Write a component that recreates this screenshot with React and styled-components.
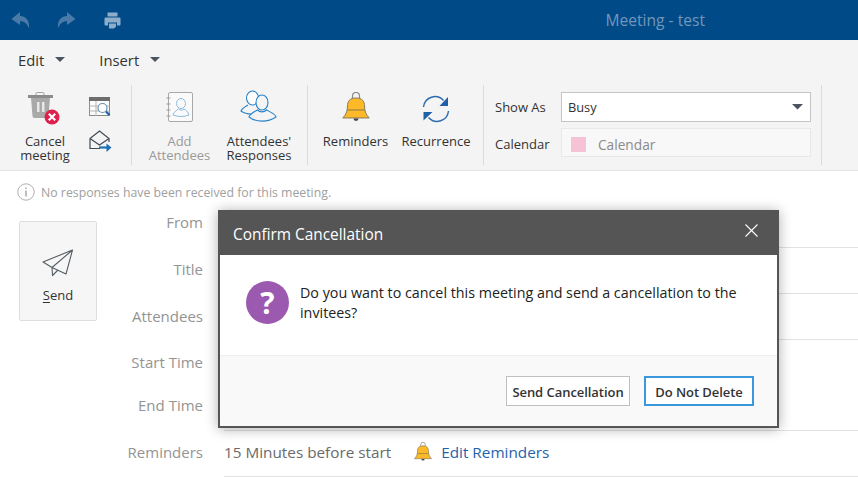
import React from "react";
import styled, { createGlobalStyle } from "styled-components";

const Global = createGlobalStyle`
  html, body { margin: 0; padding: 0; background: #fff; }
  body { font-family: "Open Sans", "Noto Sans", "Liberation Sans", sans-serif; overflow: hidden; }
  * { box-sizing: border-box; }
`;

const Page = styled.div`
  position: relative;
  width: 858px;
  height: 478px;
  overflow: hidden;
  background: #fff;
`;

const TitleBar = styled.header`
  height: 40px;
  background: #004a88;
  display: flex;
  align-items: center;
  padding: 0 153px 0 11px;
`;
const TitleTools = styled.div`
  display: flex;
  align-items: center;
  gap: 27px;
`;
const PrinterSlot = styled.span`
  display: flex;
  margin-left: 1px;
`;
const WindowTitle = styled.div`
  margin-left: auto;
  color: #7197bc;
  font-size: 15.6px;
  line-height: 20px;
`;

const Toolbar = styled.section`
  height: 131px;
  background: #f4f4f4;
  border-bottom: 1px solid #e4e4e4;
`;
const MenuRow = styled.nav`
  height: 45px;
  display: flex;
  align-items: center;
  padding: 0 0 6px 18px;
  gap: 34px;
`;
const Menu = styled.div`
  display: flex;
  align-items: center;
  gap: 11px;
  font-size: 14.8px;
  color: #333;
`;
const Caret = styled.span`
  width: 0;
  height: 0;
  border-left: 5.5px solid transparent;
  border-right: 5.5px solid transparent;
  border-top: 5px solid #4a5560;
`;
const Ribbon = styled.div`
  display: flex;
  height: 80px;
`;
const Group = styled.div`
  width: ${(p) => p.$w}px;
  border-right: 1px solid #dcdcdc;
  display: flex;
  padding-left: ${(p) => p.$pad || 0}px;
  flex: none;
`;
const RibbonButton = styled.div`
  width: ${(p) => p.$w}px;
  flex: none;
  display: flex;
  flex-direction: column;
  align-items: center;
  color: ${(p) => (p.$muted ? "#9a9a9a" : "#333")};
  font-size: 13px;
  line-height: 14px;
  text-align: center;
`;
const IconSlot = styled.div`
  height: 49px;
  width: 100%;
  display: flex;
  align-items: flex-start;
  justify-content: center;
  padding-top: ${(p) => p.$top}px;
`;
const TrashSlot = styled.span`
  display: flex;
  margin-left: -2px;
`;
const SmallIcons = styled.div`
  display: flex;
  flex-direction: column;
  align-items: center;
  padding-top: 12px;
  gap: 12px;
  width: 30px;
  margin-left: 10px;
`;
const FieldGrid = styled.div`
  display: grid;
  grid-template-columns: 66px 250px;
  grid-template-rows: 30px 29px;
  row-gap: 6px;
  padding: 7px 0 0 11px;
  align-items: center;
  font-size: 13px;
  color: #333;
`;
const FieldLabel = styled.span`
  padding-top: ${(p) => p.$top}px;
`;
const Select = styled.div`
  height: 30px;
  background: #fff;
  border: 1px solid #c4c4c4;
  display: flex;
  align-items: center;
  justify-content: space-between;
  padding: 0 6px 0 6px;
  font-size: 12.8px;
  color: #333;
`;
const DisabledField = styled.div`
  height: 29px;
  background: #f8f8f8;
  border: 1px solid #e8e8e8;
  display: flex;
  align-items: center;
  gap: 12px;
  padding: 3px 0 0 9px;
  font-size: 13.7px;
  color: #8a8a8a;
`;
const Swatch = styled.i`
  display: block;
  width: 15px;
  height: 15px;
  background: #f6c2d6;
`;

const Notice = styled.div`
  height: 31px;
  display: flex;
  align-items: center;
  gap: 6px;
  padding: 11px 0 0 17px;
  font-size: 12.3px;
  color: #a0a0a0;
`;

const Body = styled.main`
  display: flex;
`;
const SendColumn = styled.div`
  width: 116px;
  padding: 19px 0 0 19px;
  flex: none;
`;
const SendButton = styled.div`
  width: 78px;
  height: 100px;
  background: #f6f6f6;
  border: 1px solid #dedede;
  border-radius: 2px;
  display: flex;
  flex-direction: column;
  align-items: center;
  padding-top: 27px;
  gap: 9px;
  font-size: 13px;
  color: #333;
  u { text-underline-offset: 2px; }
`;
const Form = styled.div`
  flex: 1;
`;
const Row = styled.div`
  display: flex;
  height: ${(p) => p.$h}px;
`;
const Label = styled.div`
  width: 87px;
  flex: none;
  text-align: right;
  color: #949494;
  font-size: 15px;
  padding-top: ${(p) => p.$top}px;
  line-height: 20px;
`;
const Value = styled.div`
  flex: 1;
  margin-left: 21px;
  border-bottom: ${(p) => (p.$line ? "1px solid #e2e2e2" : "none")};
  display: flex;
  align-items: center;
  padding-bottom: 3px;
  font-size: 15.3px;
  color: #6a6a6a;
`;
const ReminderBell = styled.span`
  display: flex;
  margin: 0 9px 0 23px;
`;
const LinkText = styled.span`
  color: #1f63ab;
`;

const Dialog = styled.div`
  position: absolute;
  left: 218px;
  top: 210px;
  width: 561px;
  height: 218px;
  border: 2px solid #555;
  border-top: none;
  background: #fff;
  box-shadow: 0 1px 12px rgba(0, 0, 0, 0.32);
  display: flex;
  flex-direction: column;
`;
const DialogHead = styled.div`
  height: 45px;
  margin: 0 -2px;
  padding: 4px 21px 0 15px;
  background: #555;
  color: #fff;
  font-size: 15.4px;
  display: flex;
  align-items: center;
  justify-content: space-between;
  flex: none;
`;
const CloseSlot = styled.span`
  display: flex;
  margin-top: -9px;
`;
const DialogBody = styled.div`
  height: 100px;
  display: flex;
  padding: 26px 20px 0 26px;
  gap: 11px;
  flex: none;
`;
const Question = styled.div`
  width: 43px;
  height: 43px;
  flex: none;
  border-radius: 50%;
  background: #9b59b0;
  color: #fff;
  font-size: 30px;
  font-weight: 700;
  line-height: 43px;
  text-align: center;
`;
const Message = styled.p`
  margin: 2px 0 0;
  font-size: 14.3px;
  line-height: 20px;
  color: #222;
`;
const DialogFoot = styled.div`
  flex: 1;
  background: #f9f9f9;
  border-top: 1px solid #eee;
  display: flex;
  justify-content: flex-end;
  align-items: flex-start;
  gap: 14px;
  padding: 20px 23px 0 0;
`;
const Button = styled.div`
  height: 30px;
  width: ${(p) => p.$w}px;
  background: #fff;
  border: ${(p) => (p.$primary ? "2px solid #3c98dc" : "1px solid #c0c0c0")};
  font-size: 13px;
  font-weight: 600;
  letter-spacing: -0.05px;
  padding-top: 1px;
  color: #333;
  display: flex;
  align-items: center;
  justify-content: center;
`;

const Undo = ({ flip }) => (
  <svg width="19" height="17" viewBox="0 0 19 17" style={flip ? { transform: "scaleX(-1)" } : undefined}>
    <path d="M9 0 L0.500 7 L9 13 V9.200 C13 9 16.200 11 18 16.500 C19 9 15 4 9 4 Z" fill="#4a7ba8" />
  </svg>
);
const Printer = () => (
  <svg width="17" height="17" viewBox="0 0 17 17">
    <path d="M3.500 0.500h10v4h-10z" fill="#8fadc9" />
    <path d="M1.500 5.500h14a1 1 0 0 1 1 1v6a1 1 0 0 1-1 1h-2.500v-3h-9v3H1.500a1 1 0 0 1-1-1v-6a1 1 0 0 1 1-1z" fill="#8fadc9" />
    <path d="M5 11.500h7v3l-2 2H5z" fill="#8fadc9" />
  </svg>
);
const Trash = () => (
  <svg width="34" height="34" viewBox="0 0 34 34">
    <path d="M9 4V2.500a1 1 0 0 1 1-1h6a1 1 0 0 1 1 1V4" fill="none" stroke="#a5a5a5" />
    <rect x="1" y="4" width="25" height="3" fill="#8b8b8b" />
    <path d="M4 7h19l-1.500 18a2 2 0 0 1-2 2H7.500a2 2 0 0 1-2-2z" fill="#a9a9a9" />
    <rect x="10" y="11" width="2.500" height="10" fill="#e8e8e8" />
    <rect x="15" y="11" width="2.500" height="10" fill="#e8e8e8" />
    <circle cx="25" cy="26" r="7.500" fill="#e0204c" />
    <path d="M21.800 22.800l6.400 6.400M28.200 22.800l-6.400 6.400" stroke="#fff" strokeWidth="2.200" />
  </svg>
);
const CalendarSearch = () => (
  <svg width="23" height="21" viewBox="0 0 23 21">
    <rect x="0.500" y="0.500" width="20" height="18" fill="#fdfdfd" stroke="#8a8a8a" />
    <rect x="0" y="0" width="21" height="4" fill="#6d6d6d" />
    <path d="M0.500 9h20M0.500 14h20M7 4v15" stroke="#b4b4b4" />
    <circle cx="13.500" cy="11" r="4.500" fill="#fff" stroke="#6a8fb0" strokeWidth="1.200" />
    <path d="M17 14.500l3.500 3.500" stroke="#1f5f9f" strokeWidth="2.200" />
  </svg>
);
const EnvelopeSend = () => (
  <svg width="23" height="23" viewBox="0 0 23 23">
    <path d="M1 8.500 L10.500 1 L20 8.500 V12 M1 8.500 V18.500 H11" fill="none" stroke="#3f4a54" strokeWidth="1.200" />
    <path d="M1 8.500 L10.500 15 L20 8.500" fill="none" stroke="#3f4a54" strokeWidth="1.200" />
    <path d="M10 17.500h9" stroke="#1f6fb5" strokeWidth="2.200" />
    <path d="M17.500 13.500l5 4-5 4.500z" fill="#1f6fb5" />
  </svg>
);
const AddressBook = () => (
  <svg width="28" height="31" viewBox="0 0 28 31">
    <rect x="2.500" y="0.500" width="24" height="29" rx="1.500" fill="#fafafa" stroke="#a9a9a9" />
    <path d="M0.500 6h4M0.500 12h4M0.500 18h4M0.500 24h4" stroke="#9a9a9a" />
    <ellipse cx="15" cy="11.500" rx="4.500" ry="5" fill="none" stroke="#8fbbdc" />
    <path d="M7 23 C8 19.500 11 18 12.500 17 C14 18.500 16.500 18.500 18 17 C19.500 18 22 19.500 23 23 C18 25 12 25 7 23Z" fill="none" stroke="#8fbbdc" />
  </svg>
);
const Attendees = () => (
  <svg width="38" height="34" viewBox="0 0 38 34">
    <ellipse cx="12.500" cy="8" rx="6" ry="7" fill="#fff" stroke="#2b83c8" strokeWidth="1.100" />
    <path d="M8 15 C5 17 2 18.500 1 21 C4 23.500 8 24 12 24" fill="none" stroke="#2b83c8" strokeWidth="1.100" />
    <ellipse cx="22" cy="12.500" rx="6" ry="7.500" fill="#f4f4f4" stroke="#2b83c8" strokeWidth="1.100" />
    <path d="M17.500 20 C14 22 10 23.500 9 27 C16 32.500 28 32.500 36 27 C35 23.500 30 22 26.500 20 C24 22.500 20 22.500 17.500 20Z" fill="#f4f4f4" stroke="#2b83c8" strokeWidth="1.100" />
  </svg>
);
const Bell = ({ size = 28 }) => (
  <svg width={size} height={size * 1.07} viewBox="0 0 28 30">
    <path d="M10.500 7 V4 a3.500 3.500 0 0 1 7 0 V7" fill="none" stroke="#8a8a8a" strokeWidth="1.200" />
    <path d="M14 6 C7.500 6 5.500 9.500 5.500 14 C5.500 20 3.500 23 0.800 26 H27.200 C24.500 23 22.500 20 22.500 14 C22.500 9.500 20.500 6 14 6Z" fill="#fdb927" stroke="#857a5c" strokeWidth="1" />
    <path d="M5 18h18" stroke="#857a4c" strokeWidth="1" />
    <path d="M11.500 26.500h5a2.500 2.500 0 0 1-5 0z" fill="#444" />
  </svg>
);
const Recurrence = () => (
  <svg width="28" height="28" viewBox="0 0 28 28">
    <path d="M1.500 12 A11.500 11.500 0 0 1 21.500 5.500" fill="none" stroke="#2b6cb0" strokeWidth="1.400" />
    <path d="M26.500 16 A11.500 11.500 0 0 1 6.500 22.500" fill="none" stroke="#2b6cb0" strokeWidth="1.400" />
    <path d="M26 2 V11 H17.500 Z" fill="#1f5fa8" />
    <path d="M1.500 25.500 V17 H10.500 Z" fill="#1f5fa8" />
  </svg>
);
const Paper = () => (
  <svg width="32" height="28" viewBox="0 0 32 28">
    <path d="M30.500 1 L1 13 L10 18.500 Z M30.500 1 L10 18.500 L10.500 26.500 L15.500 21.500 M30.500 1 L24 25 L10 18.500" fill="none" stroke="#555e66" strokeWidth="1.100" strokeLinejoin="round" />
  </svg>
);
const Info = () => (
  <svg width="18" height="18" viewBox="0 0 18 18">
    <circle cx="9" cy="9" r="8.200" fill="none" stroke="#b0b0b0" strokeWidth="1" />
    <rect x="8.300" y="7.500" width="1.400" height="6" fill="#a0a0a0" />
    <rect x="8.300" y="4.500" width="1.400" height="1.500" fill="#a0a0a0" />
  </svg>
);
const Close = () => (
  <svg width="13" height="13" viewBox="0 0 13 13">
    <path d="M0.500 0.500l12 12M12.500 0.500l-12 12" stroke="#fff" strokeWidth="1.100" />
  </svg>
);
const DownCaret = () => (
  <svg width="12" height="6" viewBox="0 0 12 6">
    <path d="M0 0h11L5.500 5.500z" fill="#4a5560" />
  </svg>
);

export default function App() {
  return (
    <Page>
      <Global />
      <TitleBar>
        <TitleTools>
          <Undo />
          <Undo flip />
          <PrinterSlot><Printer /></PrinterSlot>
        </TitleTools>
        <WindowTitle>Meeting - test</WindowTitle>
      </TitleBar>

      <Toolbar>
        <MenuRow>
          <Menu>Edit <Caret /></Menu>
          <Menu>Insert <Caret /></Menu>
        </MenuRow>
        <Ribbon>
          <Group $w={132} $pad={15}>
            <RibbonButton $w={60}>
              <IconSlot $top={6}><TrashSlot><Trash /></TrashSlot></IconSlot>
              <span>Cancel<br />meeting</span>
            </RibbonButton>
            <SmallIcons><CalendarSearch /><EnvelopeSend /></SmallIcons>
          </Group>
          <Group $w={176} $pad={7}>
            <RibbonButton $w={81} $muted>
              <IconSlot $top={7}><AddressBook /></IconSlot>
              <span>Add<br />Attendees</span>
            </RibbonButton>
            <RibbonButton $w={78}>
              <IconSlot $top={5}><Attendees /></IconSlot>
              <span>Attendees'<br />Responses</span>
            </RibbonButton>
          </Group>
          <Group $w={176} $pad={7}>
            <RibbonButton $w={81}>
              <IconSlot $top={7}><Bell /></IconSlot>
              <span>Reminders</span>
            </RibbonButton>
            <RibbonButton $w={80}>
              <IconSlot $top={10}><Recurrence /></IconSlot>
              <span>Recurrence</span>
            </RibbonButton>
          </Group>
          <Group $w={338}>
            <FieldGrid>
              <FieldLabel $top={0}>Show As</FieldLabel>
              <Select>Busy <DownCaret /></Select>
              <FieldLabel $top={2}>Calendar</FieldLabel>
              <DisabledField><Swatch />Calendar</DisabledField>
            </FieldGrid>
          </Group>
        </Ribbon>
      </Toolbar>

      <Notice><Info />No responses have been received for this meeting.</Notice>

      <Body>
        <SendColumn>
          <SendButton>
            <Paper />
            <span><u>S</u>end</span>
          </SendButton>
        </SendColumn>
        <Form>
          <Row $h={46}><Label $top={10}>From</Label><Value $line /></Row>
          <Row $h={46}><Label $top={11}>Title</Label><Value $line /></Row>
          <Row $h={46}><Label $top={12}>Attendees</Label><Value $line /></Row>
          <Row $h={45}><Label $top={12}>Start Time</Label><Value /></Row>
          <Row $h={46}><Label $top={10}>End Time</Label><Value $line /></Row>
          <Row $h={46}>
            <Label $top={11}>Reminders</Label>
            <Value $line>
              15 Minutes before start
              <ReminderBell><Bell size={18} /></ReminderBell>
              <LinkText>Edit Reminders</LinkText>
            </Value>
          </Row>
        </Form>
      </Body>

      <Dialog>
        <DialogHead>Confirm Cancellation <CloseSlot><Close /></CloseSlot></DialogHead>
        <DialogBody>
          <Question>?</Question>
          <Message>Do you want to cancel this meeting and send a cancellation to the invitees?</Message>
        </DialogBody>
        <DialogFoot>
          <Button $w={124}>Send Cancellation</Button>
          <Button $w={110} $primary>Do Not Delete</Button>
        </DialogFoot>
      </Dialog>
    </Page>
  );
}
